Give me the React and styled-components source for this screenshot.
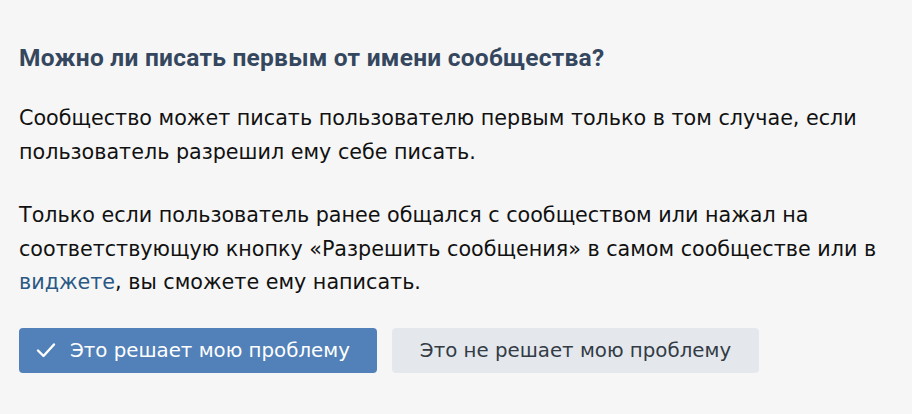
import styled, { createGlobalStyle } from "styled-components";

const GlobalStyle = createGlobalStyle`
  html, body {
    margin: 0;
    padding: 0;
    background: #f6f6f6;
  }
`;

const Page = styled.div`
  width: 912px;
  height: 414px;
  box-sizing: border-box;
  padding: 43px 19px 0 19px;
  background: #f6f6f6;
  font-family: "DejaVu Sans", Verdana, sans-serif;
  color: #111;
`;

const Title = styled.h2`
  margin: 0 0 29px;
  font-family: Roboto, "Liberation Sans", sans-serif;
  font-size: 24.5px;
  font-weight: 700;
  letter-spacing: 0.25px;
  color: #35475e;
  line-height: 30px;
`;

const Paragraph = styled.p`
  margin: 0 0 30px;
  font-size: 20.7px;
  line-height: 33.5px;

  &:last-of-type {
    margin-bottom: 28px;
  }
`;

const Link = styled.a`
  color: #2a5885;
  text-decoration: none;
`;

const Actions = styled.div`
  display: flex;
  gap: 15px;
`;

const Button = styled.button`
  display: flex;
  align-items: center;
  gap: 14px;
  height: 45px;
  padding: ${(p) => (p.$primary ? "0 27px 0 17px" : "0 28px")};
  border: none;
  border-radius: 4px;
  font-family: "DejaVu Sans", Verdana, sans-serif;
  font-size: 19.8px;
  background: ${(p) => (p.$primary ? "#5181b8" : "#e4e8ed")};
  color: ${(p) => (p.$primary ? "#fff" : "#333b45")};
`;

const Check = () => (
  <svg width="20" height="16" viewBox="0 0 20 16" fill="none">
    <path d="M2 8.5l5.5 5.5L18 2.5" stroke="#fff" strokeWidth="2.4" strokeLinecap="round" strokeLinejoin="round" />
  </svg>
);

export default function App() {
  return (
    <>
      <GlobalStyle />
      <Page>
        <Title>Можно ли писать первым от имени сообщества?</Title>
        <Paragraph>
          Сообщество может писать пользователю первым только в том случае, если
          пользователь разрешил ему себе писать.
        </Paragraph>
        <Paragraph>
          Только если пользователь ранее общался с сообществом или нажал на
          соответствующую кнопку «Разрешить сообщения» в самом сообществе или в{" "}
          <Link href="#">виджете</Link>, вы сможете ему написать.
        </Paragraph>
        <Actions>
          <Button $primary>
            <Check />
            Это решает мою проблему
          </Button>
          <Button>Это не решает мою проблему</Button>
        </Actions>
      </Page>
    </>
  );
}
